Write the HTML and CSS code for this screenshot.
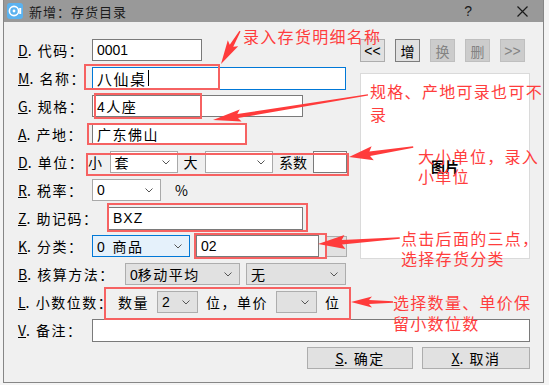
FILE: index.html
```html
<!DOCTYPE html>
<html lang="zh-CN">
<head>
  <meta charset="UTF-8" />
  <title>新增：存货目录</title>
  <link rel="stylesheet" href="styles.css">
</head>
<body>
  <div class="window">
    <div class="titlebar">
      <svg class="app-icon" width="16" height="16" viewBox="0 0 16 16">
        <rect x="0" y="0" width="16" height="16" rx="3" fill="#5bb2ef"/>
        <circle cx="7" cy="8" r="4.6" fill="none" stroke="#fff" stroke-width="1.6"/>
        <circle cx="7" cy="8" r="1.4" fill="#fff"/>
        <rect x="12.2" y="5" width="2" height="6" fill="#fff"/>
      </svg>
      <span class="title">新增：存货目录</span>
      <span class="help">?</span>
      <span class="close">
        <svg width="11" height="11" viewBox="0 0 11 11"><path d="M0.5 0.5 L10.5 10.5 M10.5 0.5 L0.5 10.5" stroke="#1a1a1a" stroke-width="1.2"/></svg>
      </span>
    </div>

    <div class="client">
      <div class="top">
        <div class="fields">
          <div class="row">
            <span class="lbl"><u>D</u>. 代码：</span>
            <div class="edit w-code">0001</div>
          </div>
          <div class="row">
            <span class="lbl"><u>M</u>. 名称：</span>
            <div class="edit edit-focus w-name cjk">八仙桌<span class="caret"></span></div>
          </div>
          <div class="row">
            <span class="lbl"><u>G</u>. 规格：</span>
            <div class="edit w-spec cjk">4人座</div>
          </div>
          <div class="row">
            <span class="lbl"><u>A</u>. 产地：</span>
            <div class="edit w-origin cjk">广东佛山</div>
          </div>
          <div class="row row-unit">
            <span class="lbl lbl-unit"><u>D</u>. 单位：</span>
            <span class="txt">小</span>
            <div class="combo w-unit"><span class="val cjk">套</span><svg class="chev" width="8" height="5" viewBox="0 0 8 5"><polyline points="0.5,0.5 4,4 7.5,0.5" fill="none" stroke="#555" stroke-width="1"/></svg></div>
            <span class="txt">大</span>
            <div class="combo w-unit"><span class="val"></span><svg class="chev" width="8" height="5" viewBox="0 0 8 5"><polyline points="0.5,0.5 4,4 7.5,0.5" fill="none" stroke="#555" stroke-width="1"/></svg></div>
            <span class="txt txt-tight">系数</span>
            <div class="edit w-coef"></div>
          </div>
          <div class="row">
            <span class="lbl"><u>R</u>. 税率：</span>
            <div class="combo w-tax"><span class="val">0</span><svg class="chev" width="8" height="5" viewBox="0 0 8 5"><polyline points="0.5,0.5 4,4 7.5,0.5" fill="none" stroke="#555" stroke-width="1"/></svg></div>
            <span class="txt pct">%</span>
          </div>
          <div class="row">
            <span class="lbl lbl-mnem"><u>Z</u>. 助记码：</span>
            <div class="edit w-mnem serif">BXZ</div>
          </div>
          <div class="row row-class">
            <span class="lbl lbl-class"><u>K</u>. 分类：</span>
            <div class="combo combo-focus w-class"><span class="val">0&nbsp;&nbsp;<span class="cjk">商品</span></span><svg class="chev" width="8" height="5" viewBox="0 0 8 5"><polyline points="0.5,0.5 4,4 7.5,0.5" fill="none" stroke="#555" stroke-width="1"/></svg></div>
            <div class="edit w-classcode">02</div>
            <div class="btn btn-dots"></div>
          </div>
          <div class="row row-method">
            <span class="lbl lbl-method"><u>B</u>. 核算方法：</span>
            <div class="combo combo-gray w-method"><span class="val">0<span class="cjk">移动平均</span></span><svg class="chev" width="8" height="5" viewBox="0 0 8 5"><polyline points="0.5,0.5 4,4 7.5,0.5" fill="none" stroke="#555" stroke-width="1"/></svg></div>
            <div class="combo combo-gray w-none"><span class="val cjk">无</span><svg class="chev" width="8" height="5" viewBox="0 0 8 5"><polyline points="0.5,0.5 4,4 7.5,0.5" fill="none" stroke="#555" stroke-width="1"/></svg></div>
          </div>
          <div class="row row-digits">
            <span class="lbl lbl-digits"><u>L</u>. 小数位数：</span>
            <span class="txt">数量</span>
            <div class="combo combo-gray w-digit"><span class="val">2</span><svg class="chev" width="8" height="5" viewBox="0 0 8 5"><polyline points="0.5,0.5 4,4 7.5,0.5" fill="none" stroke="#555" stroke-width="1"/></svg></div>
            <span class="txt">位，单价</span>
            <div class="combo combo-gray w-digit"><span class="val"></span><svg class="chev" width="8" height="5" viewBox="0 0 8 5"><polyline points="0.5,0.5 4,4 7.5,0.5" fill="none" stroke="#555" stroke-width="1"/></svg></div>
            <span class="txt">位</span>
          </div>
        </div>

        <div class="side">
          <div class="nav">
            <div class="btn nav-btn">&lt;&lt;</div>
            <div class="btn nav-btn nav-add">增</div>
            <div class="btn nav-btn disabled">换</div>
            <div class="btn nav-btn disabled">删</div>
            <div class="btn nav-btn disabled">&gt;&gt;</div>
          </div>
          <div class="picture">图片</div>
        </div>
      </div>

      <div class="row">
        <span class="lbl"><u>V</u>. 备注：</span>
        <div class="edit w-memo"></div>
      </div>

      <div class="actions">
        <div class="btn action-btn"><span><u>S</u>. 确定</span></div>
        <div class="btn action-btn action-cancel"><span><u>X</u>. 取消</span></div>
      </div>
    </div>
  </div>

  <!-- red annotations drawn over the dialog -->
  <div class="mark mark-name"></div>
  <div class="mark mark-spec"></div>
  <div class="mark mark-origin"></div>
  <div class="mark mark-unit"></div>
  <div class="mark mark-mnem"></div>
  <div class="mark mark-class"></div>
  <div class="mark mark-digits"></div>

  <svg class="arrows" width="549" height="385" viewBox="0 0 549 385">
    <g fill="#ff3b3b">
      <polygon points="0,0 -24,-6 -21,-2 -38,-0.6 -38,0.6 -21,2 -24,6" transform="translate(221 64) rotate(120)"/>
      <polygon points="0,0 -28,-6 -25,-2 -157,-0.7 -157,0.7 -25,2 -28,6" transform="translate(213 120) rotate(170.8)"/>
      <polygon points="0,0 -24,-7 -21,-2.2 -65,-0.7 -65,0.7 -21,2.2 -24,7" transform="translate(349 157) rotate(171.1)"/>
      <polygon points="0,0 -27,-7 -24,-2.2 -82,-0.7 -82,0.7 -24,2.2 -27,7" transform="translate(318 244) rotate(175.8)"/>
      <polygon points="0,0 -21,-5.5 -18,-2 -42,-0.7 -42,0.7 -18,2 -21,5.5" transform="translate(351 302) rotate(180)"/>
    </g>
  </svg>

  <div class="note note-name">录入存货明细名称</div>
  <div class="note note-spec">规格、产地可录也可不<br>录</div>
  <div class="note note-unit">大小单位，录入<br>小单位</div>
  <div class="note note-class">点击后面的三点，<br>选择存货分类</div>
  <div class="note note-digits">选择数量、单价保<br>留小数位数</div>
</body>
</html>
```

FILE: styles.css
```css
body {
  margin: 0;
  width: 549px;
  height: 385px;
  position: relative;
  overflow: hidden;
  background: #f4f4f4;
  font-family: "Noto Sans CJK SC", sans-serif;
  color: #000;
}

.window {
  margin-left: 3px;
  width: 541px;
  height: 383px;
  box-sizing: border-box;
  border: 1px solid #868686;
  border-top: 0;
  background: #f0f0f0;
}

/* title bar */

.titlebar {
  height: 22px;
  background: #999999;
  display: flex;
  align-items: center;
  padding-left: 3px;
}

.app-icon {
  flex: none;
}

.title {
  margin-left: 6px;
  font-size: 13px;
  letter-spacing: 1px;
  color: #1b1b1b;
}

.help {
  margin-left: auto;
  font-family: "Liberation Sans", sans-serif;
  font-size: 14px;
  color: #1b1b1b;
}

.close {
  display: flex;
  margin-left: 45px;
  margin-right: 15px;
}

/* client area */

.client {
  padding: 14px 13px 0 14px;
}

.top {
  display: flex;
}

.fields {
  width: 332px;
}

.side {
  margin-left: 10px;
  width: 170px;
  padding-top: 3px;
}

.row {
  display: flex;
  align-items: center;
  height: 28px;
}

.lbl {
  flex: none;
  width: 74px;
  font-size: 14px;
  letter-spacing: 1.5px;
  white-space: nowrap;
}

.lbl u {
  letter-spacing: 0;
}

.lbl-unit { width: 64px; }
.lbl-mnem { width: 90px; }
.lbl-class { width: 68px; }
.lbl-method { width: 101px; }
.lbl-digits { width: 92px; }

.txt {
  font-size: 14px;
  letter-spacing: 1.5px;
  white-space: nowrap;
}

.txt-tight {
  letter-spacing: 0;
}

.cjk {
  font-family: "Noto Sans CJK SC", sans-serif;
  letter-spacing: 1.5px;
}

.serif {
  font-family: "Liberation Serif", serif;
  letter-spacing: 1px;
}

.row-unit,
.row-class,
.row-method {
  gap: 6px;
}

.row-digits {
  gap: 8px;
}

.pct {
  margin-left: 14px;
}

/* edit boxes */

.edit {
  flex: none;
  height: 22px;
  box-sizing: border-box;
  border: 1px solid #7a7a7a;
  background: #fff;
  padding: 0 4px;
  display: flex;
  align-items: center;
  font-family: "Liberation Sans", "Noto Sans CJK SC", sans-serif;
  font-size: 14px;
}

.edit-focus {
  height: 23px;
  border-color: #0078d7;
  font-size: 15px;
}

.caret {
  display: inline-block;
  width: 0;
  height: 16px;
  border-left: 1px solid #000;
  margin-left: 1px;
}

.w-code { width: 110px; }
.w-name { width: 254px; }
.w-spec { width: 211px; }
.w-origin { width: 154px; }
.w-coef { width: 34px; }
.w-mnem { width: 195px; height: 23px; }
.w-classcode { width: 123px; }
.w-memo { width: 438px; height: 23px; }

/* combo boxes */

.combo {
  flex: none;
  height: 22px;
  box-sizing: border-box;
  border: 1px solid #a9a9a9;
  background: #fff;
  padding-left: 4px;
  display: flex;
  align-items: center;
  font-family: "Liberation Sans", "Noto Sans CJK SC", sans-serif;
  font-size: 14px;
}

.combo .val {
  flex: 1;
  white-space: nowrap;
}

.chev {
  flex: none;
  margin-right: 7px;
}

.combo-gray {
  background: #e1e1e1;
  border-color: #adadad;
}

.combo-focus {
  background: #e5f1fb;
  border-color: #0078d7;
}

.w-unit { width: 68px; }
.w-tax { width: 69px; }
.w-class { width: 98px; }
.w-method { width: 115px; }
.w-none { width: 100px; }
.w-digit { width: 41px; }

/* buttons */

.btn {
  flex: none;
  box-sizing: border-box;
  background: #e1e1e1;
  border: 1px solid #adadad;
  display: flex;
  align-items: center;
  justify-content: center;
  font-size: 14px;
}

.btn-dots {
  width: 22px;
  height: 21px;
}

.nav {
  display: flex;
  gap: 10px;
}

.nav-btn {
  width: 25px;
  height: 23px;
  font-family: "Liberation Sans", "Noto Sans CJK SC", sans-serif;
}

.nav-add {
  border-color: #7d7d7d;
}

.nav-btn.disabled {
  background: #cccccc;
  border-color: #bfbfbf;
  color: #838383;
}

.picture {
  margin-top: 11px;
  height: 186px;
  box-sizing: border-box;
  background: #fff;
  border: 1px solid #dadada;
  display: flex;
  align-items: center;
  justify-content: center;
  font-size: 14px;
  font-weight: bold;
}

.actions {
  display: flex;
  justify-content: flex-end;
  gap: 9px;
  margin-top: 3px;
}

.action-btn {
  width: 106px;
  height: 22px;
  letter-spacing: 1.5px;
}

.action-btn u {
  letter-spacing: 0;
}

.action-cancel {
  width: 108px;
}

/* annotations */

.mark {
  position: absolute;
  box-sizing: border-box;
  border: 2px solid #f66262;
}

.mark-name { left: 84px; top: 64px; width: 136px; height: 26px; }
.mark-spec { left: 94px; top: 93px; width: 108px; height: 26px; }
.mark-origin { left: 87px; top: 123px; width: 160px; height: 22px; }
.mark-unit { left: 86px; top: 153px; width: 263px; height: 23px; }
.mark-mnem { left: 107px; top: 203px; width: 201px; height: 29px; }
.mark-class { left: 194px; top: 233px; width: 133px; height: 26px; }
.mark-digits { left: 104px; top: 287px; width: 247px; height: 33px; }

.arrows {
  position: absolute;
  left: 0;
  top: 0;
}

.note {
  position: absolute;
  font-size: 16px;
  line-height: 20px;
  letter-spacing: 1.3px;
  color: #ff3d3d;
  white-space: nowrap;
}

.note-name { left: 243px; top: 28px; line-height: 16px; }
.note-spec { left: 370px; top: 80px; line-height: 23px; }
.note-unit { left: 418px; top: 146px; }
.note-class { left: 401px; top: 228px; }
.note-digits { left: 393px; top: 292px; line-height: 21px; }
```
